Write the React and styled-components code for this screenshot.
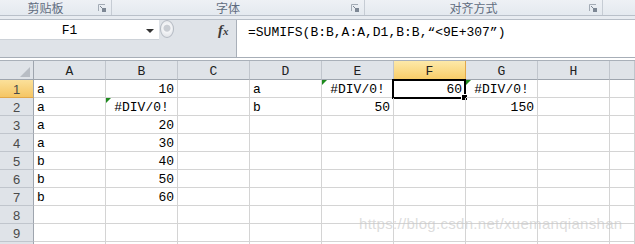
import styled, { createGlobalStyle } from "styled-components";

const GlobalStyle = createGlobalStyle`
  body {
    margin: 0;
    background: #fff;
    overflow: hidden;
  }
`;

const Page = styled.div`
  position: relative;
  width: 635px;
  height: 244px;
  overflow: hidden;
  font-family: 'Liberation Mono', monospace;
`;

const Ribbon = styled.div`
  display: flex;
  height: 16px;
  box-sizing: border-box;
  background: linear-gradient(#eef1f5, #e4e9ef);
  border-bottom: 1px solid #b9c0c9;
`;

const Group = styled.div`
  display: flex;
  align-items: center;
  width: ${(p) => p.$w}px;
  flex: ${(p) => (p.$w ? "none" : 1)};
  box-sizing: border-box;
  border-right: ${(p) => (p.$w ? "1px solid #c6ccd4" : "none")};
`;

const GroupLabel = styled.span`
  flex: 1;
  text-align: center;
  font-family: 'Noto Sans CJK SC', sans-serif;
  font-size: 12px;
  line-height: 15px;
  color: #5f6c7e;
`;

const Launcher = styled.svg`
  width: 8px;
  height: 8px;
  margin: 0 5px 0 7px;
`;

function DialogLauncher() {
  return (
    <Launcher viewBox="0 0 8 8">
      <path d="M0.5 7V0.5H7" stroke="#a3abb5" fill="none" />
      <rect x="4" y="4" width="4" height="4" fill="#7d8794" />
      <path d="M2 2L5 5" stroke="#7d8794" />
    </Launcher>
  );
}

const BarWrap = styled.div`
  padding-top: 3px;
  background: #e8ecf1;
`;

const FormulaBar = styled.div`
  display: flex;
  height: 39px;
  box-sizing: border-box;
  border-top: 1px solid #b7bec7;
  border-bottom: 1px solid #a7aeb7;
  background: #dfe3e8;
`;

const NameArea = styled.div`
  display: flex;
  align-items: flex-start;
  width: 237px;
  box-sizing: border-box;
  border-right: 1px solid #a9b0b9;
`;

const NameBox = styled.div`
  display: flex;
  align-items: center;
  width: 159px;
  height: 19px;
  background: #fff;
  border-bottom: 1px solid #cdd2d8;
  box-sizing: content-box;
`;

const NameText = styled.span`
  flex: 1;
  text-align: center;
  font-size: 13px;
  line-height: 19px;
  padding-top: 2px;
  color: #000;
`;

const DropArrow = styled.span`
  width: 0;
  height: 0;
  margin: 2px 5px 0 7px;
  border-left: 4px solid transparent;
  border-right: 4px solid transparent;
  border-top: 4px solid #333;
`;

const Grip = styled.span`
  width: 14px;
  height: 18px;
  margin-left: 1px;
  border-radius: 50%;
  box-sizing: border-box;
  border: 1px solid #b4bac2;
  background: radial-gradient(circle at 50% 45%, #c9cdd3 0 3px, #f4f5f7 4px, #d9dde2 100%);
`;

const Fx = styled.span`
  margin-left: 44px;
  font-family: 'Liberation Serif', serif;
  font-style: italic;
  font-weight: bold;
  font-size: 15px;
  line-height: 19px;
  padding-top: 1px;
  color: #3c3c3c;

  small {
    font-size: 11px;
  }
`;

const FormulaInput = styled.div`
  flex: 1;
  background: #fff;
  padding: 5px 0 0 11px;
  font-size: 13px;
  line-height: 15px;
  color: #000;
  white-space: nowrap;
`;

const Sheet = styled.div`
  display: grid;
  grid-template-columns: 34px repeat(8, 72px) 1fr;
  grid-template-rows: 19px;
  grid-auto-rows: 18px;
  margin-top: 2px;
  border-top: 1px solid #a9b0b9;
`;

const ColHead = styled.div`
  position: relative;
  box-sizing: border-box;
  display: flex;
  align-items: center;
  justify-content: center;
  padding-top: 2px;
  font-size: 13px;
  color: #222;
  background: ${(p) => (p.$active ? "linear-gradient(#fde9a9, #f8cd69)" : "#dfe3e8")};
  border-right: 1px solid ${(p) => (p.$active ? "#e2a849" : "#c0c5cc")};
  border-bottom: 1px solid ${(p) => (p.$active ? "#e2a849" : "#9ea5ae")};
`;

const Corner = styled(ColHead)`
  border-right-color: #9ea5ae;

  &::after {
    content: "";
    position: absolute;
    right: 3px;
    bottom: 2px;
    border-left: 10px solid transparent;
    border-bottom: 10px solid #b8bdc4;
  }
`;

const RowHead = styled.div`
  box-sizing: border-box;
  display: flex;
  align-items: center;
  justify-content: center;
  padding-top: 1px;
  font-family: 'Liberation Sans', sans-serif;
  font-size: 13px;
  color: #4a4a4a;
  background: ${(p) => (p.$active ? "linear-gradient(#fbe09a, #f5c664)" : "#dfe3e8")};
  border-right: 1px solid #9ea5ae;
  border-bottom: 1px solid ${(p) => (p.$active ? "#e2a849" : "#c0c5cc")};
`;

const Cell = styled.div`
  position: relative;
  box-sizing: border-box;
  padding: 2px 3px 0;
  font-size: 13px;
  line-height: 15px;
  color: #000;
  white-space: nowrap;
  text-align: ${(p) => p.$align || "left"};
  border-right: 1px solid #d4d4d4;
  border-bottom: 1px solid #d4d4d4;

  &::before {
    content: "";
    display: ${(p) => (p.$err ? "block" : "none")};
    position: absolute;
    left: 0;
    top: 0;
    border-top: 5px solid #1d8a1d;
    border-right: 5px solid transparent;
  }
`;

const Selection = styled.div`
  position: absolute;
  left: -2px;
  top: -1px;
  right: -1px;
  bottom: -2px;
  border: 2px solid #000;
  pointer-events: none;
`;

const FillHandle = styled.div`
  position: absolute;
  right: -4px;
  bottom: -4px;
  width: 5px;
  height: 5px;
  background: #000;
  border: 1px solid #fff;
`;

const Watermark = styled.div`
  position: absolute;
  left: 359px;
  top: 215px;
  font-family: 'Liberation Sans', sans-serif;
  font-size: 15px;
  color: rgba(200, 200, 200, 0.65);
  letter-spacing: 0.3px;
`;

const cols = ["A", "B", "C", "D", "E", "F", "G", "H", ""];

const ERR = "#DIV/0!";

// cell value: [text, align, errorIndicator]
const rows = [
  { A: ["a"], B: ["10", "right"], D: ["a"], E: [ERR, "center", true], F: ["60", "right"], G: [ERR, "center", true] },
  { A: ["a"], B: [ERR, "center", true], D: ["b"], E: ["50", "right"], G: ["150", "right"] },
  { A: ["a"], B: ["20", "right"] },
  { A: ["a"], B: ["30", "right"] },
  { A: ["b"], B: ["40", "right"] },
  { A: ["b"], B: ["50", "right"] },
  { A: ["b"], B: ["60", "right"] },
  {},
  {},
  {},
];

export default function App() {
  return (
    <Page>
      <GlobalStyle />
      <Ribbon>
        <Group $w={112}>
          <GroupLabel>剪贴板</GroupLabel>
          <DialogLauncher />
        </Group>
        <Group $w={253}>
          <GroupLabel>字体</GroupLabel>
          <DialogLauncher />
        </Group>
        <Group $w={238}>
          <GroupLabel>对齐方式</GroupLabel>
          <DialogLauncher />
        </Group>
        <Group />
      </Ribbon>

      <BarWrap>
        <FormulaBar>
          <NameArea>
            <NameBox>
              <NameText>F1</NameText>
              <DropArrow />
            </NameBox>
            <Grip />
            <Fx>
              f<small>x</small>
            </Fx>
          </NameArea>
          <FormulaInput>=SUMIFS(B:B,A:A,D1,B:B,“&lt;9E+307”)</FormulaInput>
        </FormulaBar>
      </BarWrap>

      <Sheet>
        <Corner />
        {cols.map((c, i) => (
          <ColHead key={i} $active={c === "F"}>
            {c}
          </ColHead>
        ))}
        {rows.map((row, r) => (
          <div key={r} style={{ display: "contents" }}>
            {/* row 10 is cut by the window edge, its number is not visible */}
            <RowHead $active={r === 0}>{r < 9 ? r + 1 : ""}</RowHead>
            {cols.map((c, i) => {
              const v = row[c] || [];
              const selected = r === 0 && c === "F";
              return (
                <Cell key={i} $align={v[1]} $err={v[2]}>
                  {v[0]}
                  {selected && (
                    <Selection>
                      <FillHandle />
                    </Selection>
                  )}
                </Cell>
              );
            })}
          </div>
        ))}
      </Sheet>

      <Watermark>https://blog.csdn.net/xuemanqianshan</Watermark>
    </Page>
  );
}
